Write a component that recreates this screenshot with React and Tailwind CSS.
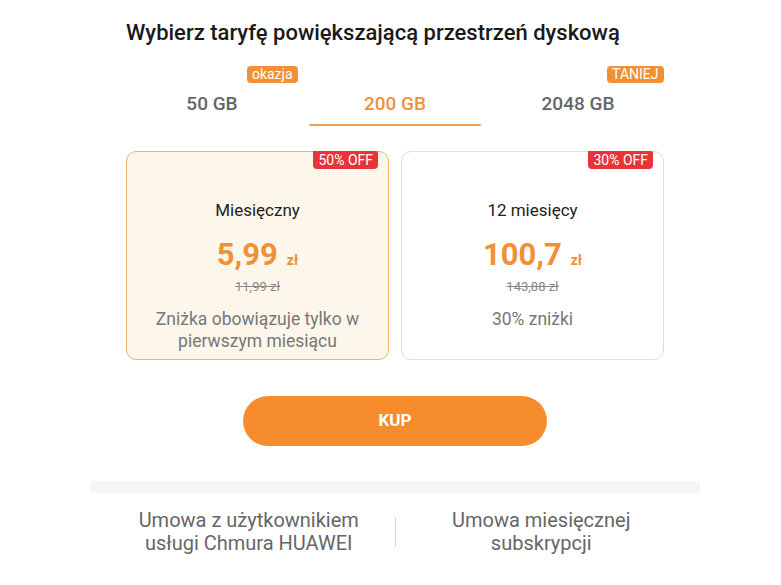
// Storage plan picker: capacity tabs, billing cards, buy button and agreement links

const tabs = [
  { label: "50 GB", badge: "okazja" },
  { label: "200 GB", active: true },
  { label: "2048 GB", badge: "TANIEJ" },
];

function PlanCard({ selected, tag, title, price, oldPrice, children }) {
  return (
    <div
      className={`relative h-[209px] rounded-[10px] flex flex-col items-center pt-[47px] ${
        selected ? "border-[1.5px] border-[#efb56c] bg-[#fdf6ea]" : "border border-[#dcdcdc] bg-white"
      }`}
    >
      <span className="absolute top-[-1px] right-[10px] h-[18px] px-[5px] rounded-b-[4px] rounded-tr-[2px] bg-[#e8333b] text-white text-[14px] leading-[18px]">
        {tag}
      </span>
      <div className="text-[17px] leading-[22px] text-[#222]">{title}</div>
      <div className="mt-[16px] flex items-baseline gap-[9px] text-[#f0913a] font-bold">
        <span className="text-[31px] leading-[36px]">{price}</span>
        <span className="text-[14px]">zł</span>
      </div>
      <div className="mt-[6px] text-[13px] leading-[16px] text-[#888] line-through">{oldPrice}</div>
      <div className="mt-[13px] text-[17.5px] leading-[22px] text-[#777] text-center">{children}</div>
    </div>
  );
}

export default function App() {
  return (
    <div className="w-[781px] h-[585px] bg-white font-['Roboto','Liberation_Sans',sans-serif] overflow-hidden">
      <div className="ml-[90px] w-[610px]">
        <h1 className="pt-[19px] pl-[36px] text-[22px] leading-[28px] font-medium text-[#1a1a1a]">
          Wybierz taryfę powiększającą przestrzeń dyskową
        </h1>

        {/* capacity tabs */}
        <div className="mt-[19px] mx-auto w-[549px] grid grid-cols-3">
          {tabs.map((t) => (
            <div key={t.label} className="relative h-[60px] flex flex-col items-center">
              {t.badge && (
                <span className="absolute top-0 right-[6px] h-[17px] px-[5px] rounded-[4px] bg-[#f39035] text-white text-[14px] leading-[17px]">
                  {t.badge}
                </span>
              )}
              <span
                className={`mt-[26px] text-[19px] leading-[24px] font-medium ${
                  t.active ? "text-[#f0913a]" : "text-[#666]"
                }`}
              >
                {t.label}
              </span>
              {t.active && <span className="mt-[8px] w-[172px] h-[3px] rounded-full bg-[#f0a050]" />}
            </div>
          ))}
        </div>

        {/* billing options */}
        <div className="mt-[25px] ml-[36px] w-[538px] grid grid-cols-2 gap-[12px]">
          <PlanCard selected tag="50% OFF" title="Miesięczny" price="5,99" oldPrice="11,99 zł">
            Zniżka obowiązuje tylko w
            <br />
            pierwszym miesiącu
          </PlanCard>
          <PlanCard tag="30% OFF" title="12 miesięcy" price="100,7" oldPrice="143,88 zł">
            30% zniżki
          </PlanCard>
        </div>

        <div className="mt-[36px] flex justify-center">
          <button className="w-[304px] h-[50px] rounded-full bg-[#f78c2d] text-white text-[17px] font-bold">
            KUP
          </button>
        </div>

        <div className="mt-[35px] h-[12px] bg-[#f5f5f5]" />
        <div className="mx-auto w-[584px] mt-[16px] flex items-center">
          <div className="flex-1 text-center text-[20px] leading-[23px] text-[#666]">
            Umowa z użytkownikiem
            <br />
            usługi Chmura HUAWEI
          </div>
          <div className="w-px h-[30px] bg-[#d5d5d5]" />
          <div className="flex-1 text-center text-[20px] leading-[23px] text-[#666]">
            Umowa miesięcznej
            <br />
            subskrypcji
          </div>
        </div>
      </div>
    </div>
  );
}
